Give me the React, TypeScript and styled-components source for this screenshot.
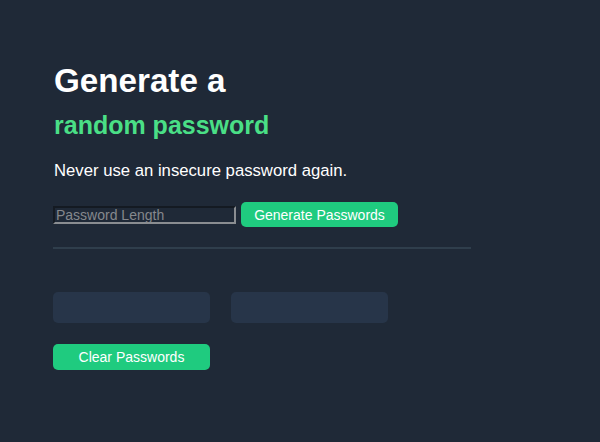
import React from "react";
import styled, { createGlobalStyle } from "styled-components";

const Global = createGlobalStyle`
  html, body { margin: 0; padding: 0; background: #1F2937; }
  body { font-family: "Liberation Sans", Arial, sans-serif; }
  * { box-sizing: border-box; }
`;

const Page = styled.main`
  width: 600px;
  height: 442px;
  background: #1F2937;
  padding: 61px 0 0 53px;
  display: flex;
  flex-direction: column;
`;

const Title = styled.h1`
  margin: 0 0 0 1px;
  font-size: 33.2px;
  line-height: 40px;
  font-weight: 700;
  color: #ffffff;
`;

const Accent = styled.h2`
  margin: 9px 0 0 1px;
  font-size: 25px;
  line-height: 30px;
  font-weight: 700;
  color: #4ADF86;
`;

const Lead = styled.p`
  margin: 21px 0 0 1px;
  font-size: 16.7px;
  line-height: 20px;
  color: #ffffff;
`;

const Controls = styled.div`
  margin-top: 21px;
  display: flex;
  align-items: center;
  gap: 5px;
`;

const LengthInput = styled.input`
  width: 183px;
  height: 18px;
  padding: 0 0 0 1px;
  margin: 1px 0 0;
  font-family: inherit;
  font-size: 14px;
  color: #ffffff;
  background: transparent;
  border: 2px solid;
  border-color: #141a22 #8a8d91 #8a8d91 #141a22;
  outline: none;
  &::placeholder { color: #85888d; }
`;

const Button = styled.button`
  width: 157px;
  height: ${(p: { $h?: number }) => p.$h ?? 25}px;
  border: none;
  border-radius: 5px;
  background: #1FCB7F;
  color: #ffffff;
  font-family: inherit;
  font-size: 14px;
  padding: 0;
  cursor: pointer;
`;

const Divider = styled.hr`
  margin: 20px 0 0;
  width: 418px;
  height: 2px;
  border: none;
  background: #2F3E4C;
`;

const Results = styled.div`
  margin-top: 43px;
  display: flex;
  gap: 21px;
`;

const ResultBox = styled.div`
  width: 157px;
  height: 31px;
  border-radius: 5px;
  background: #273549;
`;

const Footer = styled.div`
  margin-top: 21px;
`;

export default function App() {
  return (
    <>
      <Global />
      <Page>
        <Title>Generate a</Title>
        <Accent>random password</Accent>
        <Lead>Never use an insecure password again.</Lead>
        <Controls>
          <LengthInput placeholder="Password Length" />
          <Button>Generate Passwords</Button>
        </Controls>
        <Divider />
        <Results>
          <ResultBox />
          <ResultBox />
        </Results>
        <Footer>
          <Button $h={26}>Clear Passwords</Button>
        </Footer>
      </Page>
    </>
  );
}
